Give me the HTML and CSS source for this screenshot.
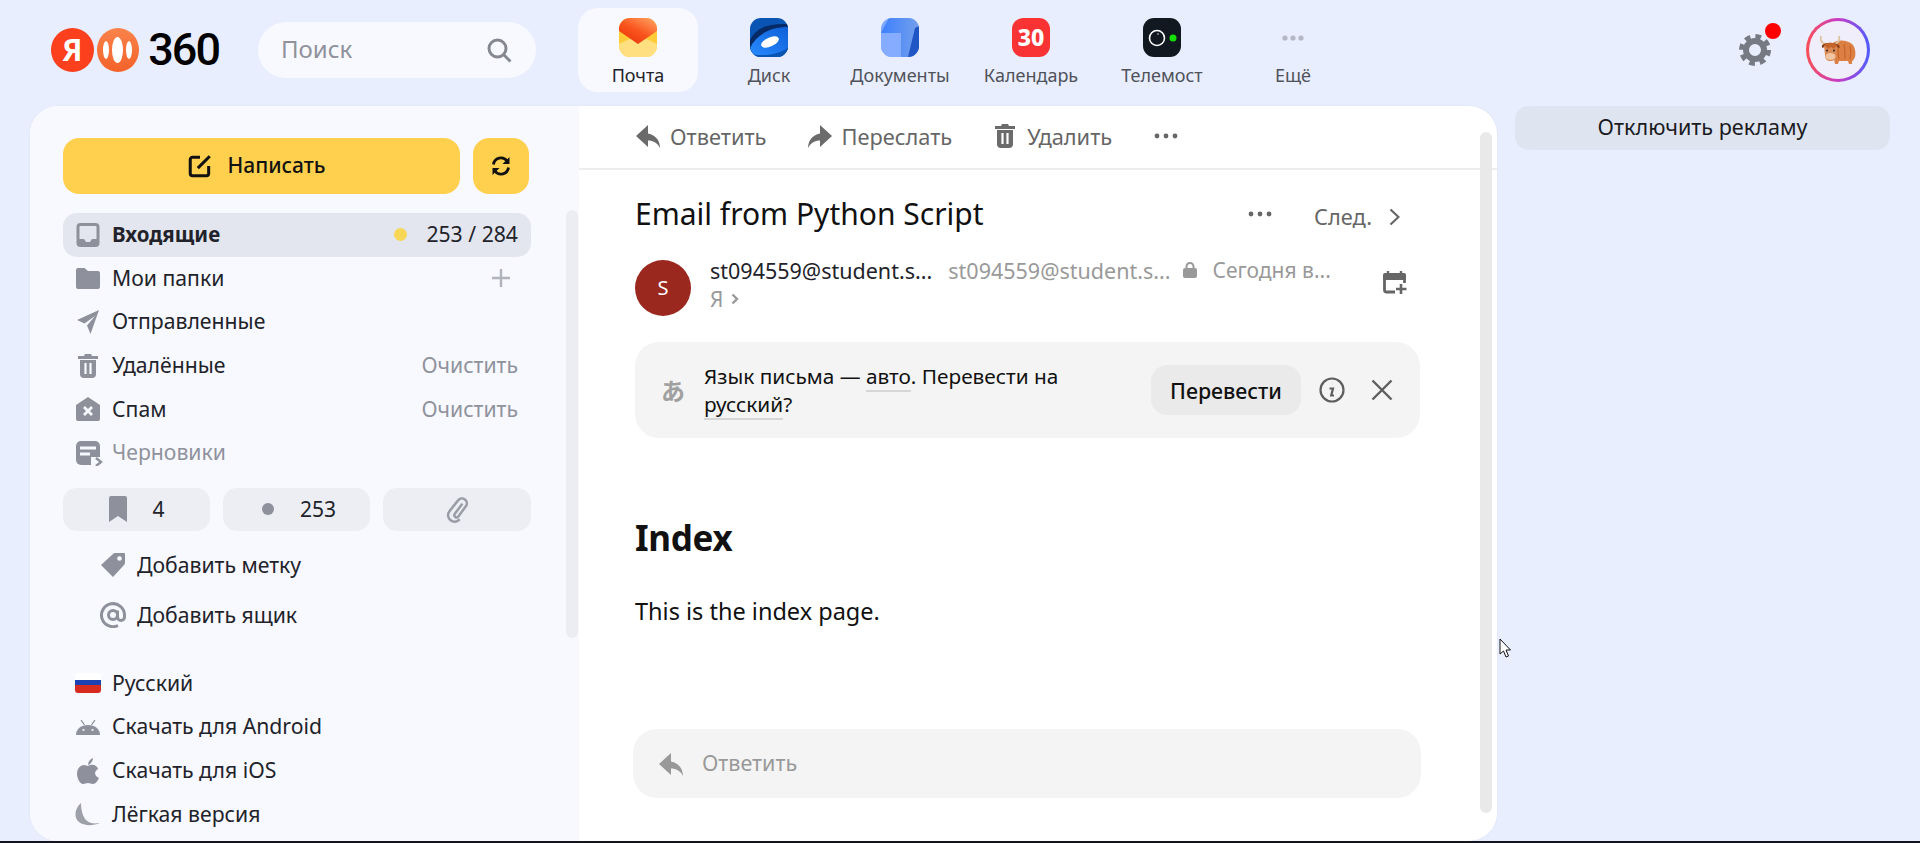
FILE: index.html
```
<!DOCTYPE html>
<html lang="ru">
<head>
<meta charset="utf-8">
<title>Почта</title>
<link rel="stylesheet" href="styles.css">
</head>
<body>
<header class="top">
  <div class="logo">
    <span class="logo-ya">Я</span>
    <span class="logo-dots"><i class="d1"></i><i class="d2"></i><i class="d3"></i></span>
    <span class="logo-num">360</span>
  </div>
  <div class="search">
    <span class="search-label">Поиск</span>
    <svg class="ic-search" viewBox="0 0 26 26"><circle cx="11.5" cy="11.5" r="8.5" fill="none" stroke="#85888f" stroke-width="3"/><path d="M17.5 17.5l7 7" stroke="#85888f" stroke-width="3" fill="none"/></svg>
  </div>
  <nav class="tabs">
    <a class="tab active">
      <svg class="app" viewBox="0 0 38 39"><defs><clipPath id="ap"><rect width="38" height="39" rx="11"/></clipPath><linearGradient id="ml" x1="0.8" y1="0" x2="0.2" y2="0.8"><stop offset="0" stop-color="#ff9a5a"/><stop offset="0.6" stop-color="#f9531c"/><stop offset="1" stop-color="#ee3f10"/></linearGradient></defs><g clip-path="url(#ap)"><rect width="38" height="39" fill="#ffcc38"/><path d="M0 39V26L19 17 38 26V39z" fill="#ffdf80"/><path d="M0 0H38V13L19 26 0 13z" fill="url(#ml)"/></g></svg>
      <span>Почта</span>
    </a>
    <a class="tab">
      <svg class="app" viewBox="0 0 38 39"><defs><clipPath id="dk"><rect width="38" height="39" rx="11"/></clipPath><linearGradient id="db" x1="0" y1="1" x2="1" y2="0"><stop offset="0" stop-color="#2a8cff"/><stop offset="1" stop-color="#0d5fd8"/></linearGradient></defs><g clip-path="url(#dk)"><rect width="38" height="39" fill="#0a54b4"/><path d="M0 22C6 10 18 5 38 6V39H0z" fill="#062a66"/><path d="M0 30C6 17 20 9 38 9V39H0z" fill="url(#db)"/><path d="M0 36C10 38 26 38 38 30V39H0z" fill="#0a54b4"/><ellipse cx="20" cy="24" rx="9.5" ry="4.5" transform="rotate(-24 20 24)" fill="#fff"/></g></svg>
      <span>Диск</span>
    </a>
    <a class="tab">
      <svg class="app" viewBox="0 0 38 39"><defs><clipPath id="dc"><rect width="38" height="39" rx="11"/></clipPath><linearGradient id="dg" x1="0" y1="0" x2="1" y2="0"><stop offset="0" stop-color="#3c7fff"/><stop offset="1" stop-color="#74a0ea"/></linearGradient></defs><g clip-path="url(#dc)"><rect width="38" height="39" fill="#7ba6ff"/><path d="M8 0H38V39H20V15H0z" fill="url(#dg)"/><path d="M27 39L34 10 38 8V39z" fill="#1f55c4"/><path d="M20 15V39H0V15z" fill="#85acff"/></g></svg>
      <span>Документы</span>
    </a>
    <a class="tab">
      <span class="cal">30</span>
      <span>Календарь</span>
    </a>
    <a class="tab">
      <svg class="app" viewBox="0 0 38 39"><rect width="38" height="39" rx="11" fill="#12181f"/><circle cx="14" cy="20" r="7.5" fill="none" stroke="#fff" stroke-width="1.6"/><circle cx="15" cy="16" r="1" fill="#889"/><circle cx="30" cy="20" r="3.5" fill="#13e000"/></svg>
      <span>Телемост</span>
    </a>
    <a class="tab">
      <svg class="app" viewBox="0 0 38 39"><g fill="#b4b7c4"><circle cx="11" cy="20" r="2.6"/><circle cx="19" cy="20" r="2.6"/><circle cx="27" cy="20" r="2.6"/></g></svg>
      <span>Ещё</span>
    </a>
  </nav>
  <div class="top-right">
    <div class="gear">
      <svg viewBox="0 0 32 32"><circle cx="16" cy="16" r="9" fill="none" stroke="#767a83" stroke-width="6"/><circle cx="16" cy="16" r="13.5" fill="none" stroke="#767a83" stroke-width="5" stroke-dasharray="5.6 5"/></svg>
      <i class="gear-dot"></i>
    </div>
    <div class="ava">
      <div class="ava-in">
        <svg viewBox="0 0 36 30"><path d="M12 9c5-5 15-4 20 0 3 3 4 8 3 13-1 2-2 4-3 4v3h-3l-1-3h-9l-1 3h-3l-1-5z" fill="#dc7f43"/><path d="M18 10c0 5 0 10 1 14M24 9c1 5 1 11 1 15M30 11c1 4 1 9 0 13" fill="none" stroke="#c5652c" stroke-width="1.200"/><path d="M1 1c-1 4 1 7 5 8M19 1c1 4-1 7-5 8" fill="none" stroke="#dcc4a0" stroke-width="1.800"/><path d="M2 10c5-3 11-3 17 0l1 3c-6-2-13-2-18 0z" fill="#8a3f17"/><path d="M4 11c4-3 9-3 13 0l-1 9c0 4-2 6-5.500 6S5 24 5 20z" fill="#d98a55"/><path d="M4 10c4-3 10-3 13 0l-3 4-3-2-3 2z" fill="#c5652c"/><ellipse cx="10.500" cy="21.500" rx="5" ry="3.600" fill="#f2c5a2"/><circle cx="7" cy="15.500" r="1" fill="#322"/><circle cx="14" cy="15.500" r="1" fill="#322"/></svg>
      </div>
    </div>
  </div>
</header>

<div class="stage">
  <main class="card">
    <aside class="side">
      <div class="actions">
        <button class="write">
          <svg viewBox="0 0 24 24" class="i24"><path d="M12 4H5a2 2 0 0 0-2 2v13a2 2 0 0 0 2 2h13a2 2 0 0 0 2-2v-7" fill="none" stroke="#111" stroke-width="2.800"/><path d="M10 14L21 3" stroke="#111" stroke-width="2.800" fill="none"/></svg>
          <span>Написать</span>
        </button>
        <button class="refresh">
          <svg viewBox="0 0 20 20" class="i20"><path d="M2.500 8.500A7.500 7.500 0 0 1 16 5M17.500 11.500A7.500 7.500 0 0 1 4 15" fill="none" stroke="#111" stroke-width="2.800"/><path d="M18.500 1v7h-7zM1.500 19v-7h7z" fill="#111"/></svg>
        </button>
      </div>
      <ul class="folders">
        <li class="row current">
          <svg class="ni" viewBox="0 0 26 26"><rect x="3" y="2.500" width="20" height="21" rx="2.500" fill="none" stroke="#8e909b" stroke-width="3"/><path d="M3 17h6l2 3h4l2-3h6v6.500H3z" fill="#8e909b"/></svg>
          <b>Входящие</b>
          <i class="unread"></i>
          <span class="count">253 / 284</span>
        </li>
        <li class="row">
          <svg class="ni" viewBox="0 0 26 26"><path d="M1 5a2 2 0 0 1 2-2h6.500l3.500 3h10a2 2 0 0 1 2 2v14a2 2 0 0 1-2 2H3a2 2 0 0 1-2-2z" fill="#8e909b"/></svg>
          <span>Мои папки</span>
          <svg class="plus" viewBox="0 0 18 18"><path d="M9 0v18M0 9h18" stroke="#b0b2bc" stroke-width="2.400"/></svg>
        </li>
        <li class="row">
          <svg class="ni" viewBox="0 0 26 26"><path d="M24 1L2 11l7.500 3.500L20 7l-8 9.500 3.500 8.500z" fill="#8e909b"/></svg>
          <span>Отправленные</span>
        </li>
        <li class="row">
          <svg class="ni" viewBox="0 0 26 26"><path d="M10 1h6l1 2h6v3H3V3h6z" fill="#8e909b"/><path d="M5 7h16v14a4 4 0 0 1-4 4H9a4 4 0 0 1-4-4z" fill="#8e909b"/><path d="M10.500 10v11M15.500 10v11" stroke="#f8f9fe" stroke-width="2.200"/></svg>
          <span>Удалённые</span>
          <span class="clear">Очистить</span>
        </li>
        <li class="row">
          <svg class="ni" viewBox="0 0 26 26"><path d="M1 9L13 1l12 8v14a2 2 0 0 1-2 2H3a2 2 0 0 1-2-2z" fill="#8e909b"/><path d="M9 11l8 8M17 11l-8 8" stroke="#f8f9fe" stroke-width="2.800"/></svg>
          <span>Спам</span>
          <span class="clear">Очистить</span>
        </li>
        <li class="row draft">
          <svg class="ni" viewBox="0 0 28 26"><rect x="1" y="1" width="24" height="24" rx="5" fill="#8e909b"/><path d="M5 8h16M5 14h10" stroke="#f8f9fe" stroke-width="3"/><path d="M16 17h12v9H16z" fill="#f8f9fe"/><path d="M21 18l5 4-5 4" fill="none" stroke="#8e909b" stroke-width="2.400"/></svg>
          <span>Черновики</span>
        </li>
      </ul>
      <div class="chips">
        <div class="chip"><svg class="chip-i" viewBox="0 0 20 26"><path d="M1 2a2 2 0 0 1 2-2h14a2 2 0 0 1 2 2v24l-9-6-9 6z" fill="#8e909b"/></svg><span>4</span></div>
        <div class="chip chip-unread"><i class="chip-dot"></i><span>253</span></div>
        <div class="chip"><svg class="chip-clip" viewBox="0 0 24 26"><path d="M17 8l-7 9.500a2 2 0 0 0 3.200 2.500l7-9.500a4.500 4.500 0 0 0-7.200-5.500L5 15a6 6 0 0 0 9.500 7.500" fill="none" stroke="#9a9ca6" stroke-width="2.300"/></svg></div>
      </div>
      <div class="adds">
        <div class="add">
          <svg class="ni" viewBox="0 0 26 26"><path d="M15 1h9a1 1 0 0 1 1 1v9a3 3 0 0 1-1 2L13 25 1 13 13 2a3 3 0 0 1 2-1z" fill="#8e909b"/><circle cx="19.500" cy="6.500" r="2.300" fill="#f8f9fe"/></svg>
          <span>Добавить метку</span>
        </div>
        <div class="add">
          <svg class="ni" viewBox="0 0 26 26"><circle cx="13" cy="13" r="4.500" fill="none" stroke="#8e909b" stroke-width="3"/><path d="M17.500 8.500v6.500a3.500 3.500 0 0 0 7 0v-2A11.500 11.500 0 1 0 18 23.500" fill="none" stroke="#8e909b" stroke-width="3"/></svg>
          <span>Добавить ящик</span>
        </div>
      </div>
      <ul class="foot">
        <li class="row">
          <span class="flag"></span>
          <span>Русский</span>
        </li>
        <li class="row">
          <svg class="ni" viewBox="0 0 26 26"><path d="M1 21c0-6 5-10 12-10s12 4 12 10z" fill="#8e909b"/><path d="M6 6l3.500 5M20 6l-3.500 5" stroke="#8e909b" stroke-width="1.300"/><circle cx="8.500" cy="16" r="1.100" fill="#f8f9fe"/><circle cx="17.500" cy="16" r="1.100" fill="#f8f9fe"/></svg>
          <span>Скачать для Android</span>
        </li>
        <li class="row">
          <svg class="ni" viewBox="0 0 26 26"><path d="M13 8c2-1 5-2 8 0 1 1 2 2 2 3-4 2-4 7 1 9-1 2-3 6-6 6-2 0-3-1-5-1s-3 1-5 1c-3 0-6-6-6-10 0-6 4-9 7-9 2 0 3 1 4 1z" fill="#8e909b"/><path d="M13 7c0-3 2-6 5-7 0 3-2 6-5 7z" fill="#8e909b"/></svg>
          <span>Скачать для iOS</span>
        </li>
        <li class="row">
          <svg class="ni" viewBox="0 0 26 26"><path d="M6 2C-1 8-1 17 4 21s14 4 21 1c-7 1-11 0-14-3S6 9 6 2z" fill="#9d9fa9"/></svg>
          <span>Лёгкая версия</span>
        </li>
      </ul>
      <i class="side-scroll"></i>
    </aside>

    <section class="mail">
      <div class="toolbar">
        <a class="tool">
          <svg class="ti" viewBox="0 0 26 26"><path d="M13 2L1 13l12 11v-6.500c5 0 9 2 12 7.500 0-7-4-13-12-14.500z" fill="#6b6b6b"/></svg>
          <span>Ответить</span>
        </a>
        <a class="tool">
          <svg class="ti" viewBox="0 0 26 26"><path d="M13 2l12 11-12 11v-6.500c-5 0-9 2-12 7.500 0-7 4-13 12-14.500z" fill="#6b6b6b"/></svg>
          <span>Переслать</span>
        </a>
        <a class="tool">
          <svg class="ti" viewBox="0 0 26 26"><path d="M10 1h6l1 2h6v3H3V3h6z" fill="#6b6b6b"/><path d="M5 7h16v14a4 4 0 0 1-4 4H9a4 4 0 0 1-4-4z" fill="#6b6b6b"/><path d="M10.500 10v11M15.500 10v11" stroke="#fff" stroke-width="2.200"/></svg>
          <span>Удалить</span>
        </a>
        <svg class="dots" viewBox="0 0 24 6"><g fill="#666"><circle cx="3" cy="3" r="2.400"/><circle cx="12" cy="3" r="2.400"/><circle cx="21" cy="3" r="2.400"/></g></svg>
      </div>
      <div class="content">
        <div class="subject">
          <h2>Email from Python Script</h2>
          <svg class="dots" viewBox="0 0 24 6"><g fill="#666"><circle cx="3" cy="3" r="2.400"/><circle cx="12" cy="3" r="2.400"/><circle cx="21" cy="3" r="2.400"/></g></svg>
          <span class="next">След.</span>
          <svg class="chev" viewBox="0 0 11 18"><path d="M1.500 1.500L9.500 9l-8 7.500" fill="none" stroke="#666" stroke-width="2.200"/></svg>
        </div>
        <div class="sender">
          <div class="sender-ava">S</div>
          <div class="sender-info">
            <div class="line1">
              <span class="name">st094559@student.s...</span>
              <span class="addr">st094559@student.s...</span>
              <svg class="lock" viewBox="0 0 14 16"><path d="M3.500 7V4.500a3.500 3.500 0 0 1 7 0V7" fill="none" stroke="#999" stroke-width="2"/><rect y="6" width="14" height="10" rx="2" fill="#999"/></svg>
              <span class="addr date">Сегодня в...</span>
            </div>
            <div class="line2">
              <span>Я</span>
              <svg class="mini-chev" viewBox="0 0 8 12"><path d="M1.500 1.500L6 6l-4.500 4.500" fill="none" stroke="#999" stroke-width="2.400"/></svg>
            </div>
          </div>
          <svg class="calplus" viewBox="0 0 24 25"><path d="M5 1v4M18 1v4" stroke="#666" stroke-width="2.400"/><path d="M0 5a2 2 0 0 1 2-2h19a2 2 0 0 1 2 2v5H0z" fill="#666"/><path d="M1.500 9v11a2 2 0 0 0 2 2H12M21.500 9v4" fill="none" stroke="#666" stroke-width="2.800"/><path d="M18 14v10M13 19h10.500" stroke="#666" stroke-width="2.600"/></svg>
        </div>
        <div class="translate">
          <span class="tr-icon">あ</span>
          <p class="tr-text">Язык письма — <u>авто</u>. Перевести на <u>русский</u>?</p>
          <button class="tr-btn">Перевести</button>
          <svg class="tr-info" viewBox="0 0 26 26"><circle cx="13" cy="13" r="11.500" fill="none" stroke="#5e5e5e" stroke-width="2.200"/><path d="M13.800 6.500h.1M10.500 11.500h3.500l-1.800 7h2.800" fill="none" stroke="#5e5e5e" stroke-width="2.200"/></svg>
          <svg class="tr-close" viewBox="0 0 22 22"><path d="M1.500 1.500l19 19M20.500 1.500l-19 19" stroke="#5e5e5e" stroke-width="2.400"/></svg>
        </div>
        <h1 class="body-h">Index</h1>
        <p class="body-p">This is the index page.</p>
        <div class="reply">
          <svg class="ti" viewBox="0 0 26 26"><path d="M13 2L1 13l12 11v-6.500c5 0 9 2 12 7.500 0-7-4-13-12-14.500z" fill="#999"/></svg>
          <span>Ответить</span>
        </div>
      </div>
      <i class="mail-scroll"></i>
    </section>
  </main>
  <aside class="ad-col">
    <button class="ad-off">Отключить рекламу</button>
  </aside>
</div>
<div class="strip"></div>
<svg class="cursor" viewBox="0 0 12 20"><path d="M1 1v15l3.500-3 2.500 6 2.500-1-2.500-6h4.500z" fill="#fff" stroke="#111" stroke-width="1"/></svg>
</body>
</html>
```
FILE: styles.css
```
* { box-sizing: border-box; }
html, body { margin: 0; height: 843px; overflow: hidden; }
body {
  position: relative;
  display: flex;
  flex-direction: column;
  background: #e8eefd;
  font-family: "Noto Sans", "Liberation Sans", sans-serif;
  color: #22232a;
}
ul { list-style: none; margin: 0; padding: 0; }
p, h1, h2 { margin: 0; }
button { border: 0; font: inherit; padding: 0; }
svg { display: block; flex: none; }

/* header */
.top { height: 106px; padding: 0 50px 6px 51px; display: flex; align-items: center; flex: none; }
.logo { width: 168px; display: flex; align-items: center; gap: 3px; flex: none; }
.logo-ya {
  width: 44px; height: 44px; border-radius: 50%; background: #fc3f1d; color: #fff;
  font: 700 30px/44px "Noto Sans", sans-serif; text-align: center;
}
.logo-dots {
  width: 44px; height: 44px; border-radius: 50%;
  background: linear-gradient(180deg, #f9834a, #f4622a);
  display: flex; align-items: center; justify-content: center; gap: 3px;
}
.logo-dots i { display: block; background: #fff; border-radius: 50%; height: 18px; width: 6px; }
.logo-dots .d2 { height: 26px; width: 11px; }
.logo-num {
  margin-left: 6px; font: 500 45px/44px Roboto, sans-serif; color: #000; letter-spacing: -2px;
}
.search {
  margin-left: 39px; width: 278px; height: 56px; border-radius: 28px; background: #f8f9fe;
  display: flex; align-items: center; justify-content: space-between; padding: 0 24px 0 23px;
  font-size: 24px; color: #8f929c; flex: none;
}
.search-label { margin-top: -4px; }
.ic-search { width: 26px; height: 26px; }
.tabs { margin-left: 42px; display: flex; gap: 11px; }
.tab {
  width: 120px; height: 84px; border-radius: 20px; padding-top: 10px;
  display: flex; flex-direction: column; align-items: center; gap: 7px;
  font-size: 18px; line-height: 22px; color: #50525a;
}
.tab.active { background: #f8f9fe; color: #22232a; }
.app { width: 38px; height: 39px; }
.cal {
  width: 38px; height: 39px; border-radius: 11px; background: #f93333; color: #fff;
  font: 800 23px/39px "Noto Sans", sans-serif; text-align: center; flex: none;
}
.top-right { margin-left: auto; display: flex; align-items: center; gap: 35px; }
.gear { position: relative; width: 32px; height: 32px; }
.gear svg { width: 32px; height: 32px; }
.gear-dot {
  position: absolute; left: 26px; top: -11px; width: 16px; height: 16px; border-radius: 50%; background: #ff0000;
}
.ava {
  width: 64px; height: 64px; border-radius: 50%; padding: 3px;
  background: linear-gradient(90deg, #fb4f55 0%, #c73cc6 50%, #4d5cff 100%);
}
.ava-in {
  width: 100%; height: 100%; border-radius: 50%; background: #f0eefb;
  display: flex; align-items: center; justify-content: center;
}
.ava-in svg { width: 36px; height: 30px; }

/* stage */
.stage { flex: 1; display: flex; gap: 18px; padding-left: 30px; min-height: 0; }
.card {
  width: 1467px; height: 735px; border-radius: 28px; overflow: hidden; display: flex; position: relative;
  background: #fff; box-shadow: 0 0 2px rgba(60, 80, 140, .08);
}
.side { width: 549px; flex: none; background: #f8f9fe; padding: 32px 48px 0 33px; position: relative; }
.actions { display: flex; gap: 13px; }
.write, .refresh {
  height: 56px; border-radius: 16px; background: #ffd04e; color: #111; display: flex; align-items: center; justify-content: center;
}
.write { width: 397px; gap: 14px; padding-right: 10px; font-size: 21px; font-weight: 500; }
.write span { margin-top: -2px; }
.refresh { width: 56px; }
.i24 { width: 26px; height: 26px; }
.i20 { width: 20px; height: 20px; }
.folders { margin-top: 19px; width: 468px; }
.row {
  height: 43.6px; display: flex; align-items: center; gap: 11px; padding: 0 13px 0 12px; font-size: 21.200px; color: #22232a;
}
.row > span:not(.flag), .row > b { margin-top: -2px; }
.row.current { background: #e3e6ee; border-radius: 14px; }
.row b { font-weight: 700; font-size: 20.500px; }
.ni { width: 26px; height: 26px; }
.unread { margin-left: auto; width: 13px; height: 13px; border-radius: 50%; background: #f8d757; }
.count { margin-left: 8px; }
.plus { margin-left: auto; margin-right: 8px; width: 18px; height: 18px; }
.clear { margin-left: auto; color: #8f929c; }
.draft { color: #8f929c; }
.draft .ni { width: 28px; margin-right: -2px; }
.chips { margin-top: 13px; width: 468px; display: grid; grid-template-columns: 147px 147px 148px; gap: 13px; }
.chip {
  height: 43px; border-radius: 14px; background: #eceef3; display: flex; align-items: center; justify-content: center;
  gap: 24px; font-size: 21px;
}
.chip-unread { padding-left: 5px; gap: 26px; }
.chip-i { width: 20px; height: 26px; }
.chip-clip { width: 26px; height: 28px; }
.chip-dot { width: 12px; height: 12px; border-radius: 50%; background: #8e909b; }
.adds { margin-top: 9px; padding-left: 37px; }
.add { height: 50px; display: flex; align-items: center; gap: 11px; font-size: 21.200px; }
.foot { margin-top: 22px; width: 468px; }
.flag {
  width: 26px; height: 20px; border-radius: 3px; flex: none;
  background: linear-gradient(180deg, #fff 0 33%, #1c41b2 33% 62%, #d72b1f 62% 100%);
}
.side-scroll {
  position: absolute; left: 536px; top: 104px; width: 12px; height: 428px; border-radius: 6px; background: #ebedf2;
}

/* mail */
.mail { flex: 1; position: relative; min-width: 0; }
.toolbar {
  height: 64px; border-bottom: 2px solid #ededed; padding: 0 0 2px 56px; display: flex; align-items: center; gap: 40px;
}
.tool { display: flex; align-items: center; gap: 9px; font-size: 21.800px; color: #666; }
.ti { width: 26px; height: 26px; }
.dots { width: 24px; height: 6px; }
.toolbar .dots { margin-left: 2px; }
.content { padding-left: 56px; width: 841px; }
.subject { height: 46px; margin-top: 20px; display: flex; align-items: center; padding-right: 20px; }
.subject h2 { font-weight: 400; font-size: 30px; color: #111; }
.subject .dots { margin-left: auto; margin-top: 2px; }
.next { margin-left: 42px; font-size: 21.800px; color: #666; margin-top: 6px; }
.chev { width: 11px; height: 18px; margin-left: 17px; margin-top: 8px; }
.sender { margin-top: 24px; height: 56px; display: flex; padding-right: 13px; }
.sender-ava {
  width: 56px; height: 56px; border-radius: 50%; background: #9b281f; color: #fff; text-align: center;
  font-size: 20px; line-height: 56px; flex: none;
}
.sender-info { margin-left: 19px; margin-top: -4px; }
.line1 { height: 28px; display: flex; align-items: center; font-size: 21.500px; color: #22232a; white-space: nowrap; }
.addr { color: #999; margin-left: 16px; }
.lock { width: 14px; height: 16px; margin-left: 12px; }
.date { margin-left: 16px; font-size: 21px; }
.line2 { height: 30px; display: flex; align-items: center; gap: 8px; font-size: 21px; color: #999; }
.mini-chev { width: 8px; height: 12px; }
.calplus { margin-left: auto; margin-top: 10px; width: 24px; height: 25px; }
.translate {
  margin-top: 26px; width: 785px; height: 96px; border-radius: 24px; background: #f4f4f4;
  display: flex; align-items: center; padding: 0 26px;
}
.tr-icon { width: 24px; font: 700 24px/1 "Noto Sans CJK JP", sans-serif; color: #a0a0a0; flex: none; }
.tr-text { margin-left: 19px; width: 420px; font-size: 20.800px; line-height: 28px; color: #111; }
.tr-text u { text-decoration: none; border-bottom: 2px solid #d6d6d6; }
.tr-btn {
  margin-left: auto; width: 150px; height: 50px; border-radius: 16px; background: #eaeaea; color: #111;
  font-size: 21.400px; font-weight: 500;
}
.tr-info { width: 26px; height: 26px; margin-left: 18px; }
.tr-close { width: 22px; height: 22px; margin-left: 26px; margin-right: 1px; }
.body-h { margin-top: 77px; font-size: 35px; line-height: 46px; font-weight: 700; color: #111; letter-spacing: -.3px; }
.body-p { margin-top: 35px; font-size: 23.500px; line-height: 30px; color: #111; }
.reply {
  margin-top: 103px; margin-left: -2px; width: 788px; height: 69px; border-radius: 24px; background: #f4f4f4;
  display: flex; align-items: center; gap: 18px; padding-left: 25px; font-size: 21.500px; color: #999;
}
.reply span { margin-top: -2px; }
.mail-scroll {
  position: absolute; right: 5px; top: 26px; width: 12px; height: 681px; border-radius: 6px; background: #e9e9e9;
}

/* ads */
.ad-col { width: 375px; flex: none; }
.ad-off { width: 100%; height: 44px; padding-bottom: 3px; border-radius: 14px; background: #dfe4f1; color: #1b1c22; font-size: 21.600px; }
.strip { height: 2px; background: #14141f; flex: none; }
.cursor { position: absolute; left: 1499px; top: 638px; width: 12px; height: 20px; }
```
